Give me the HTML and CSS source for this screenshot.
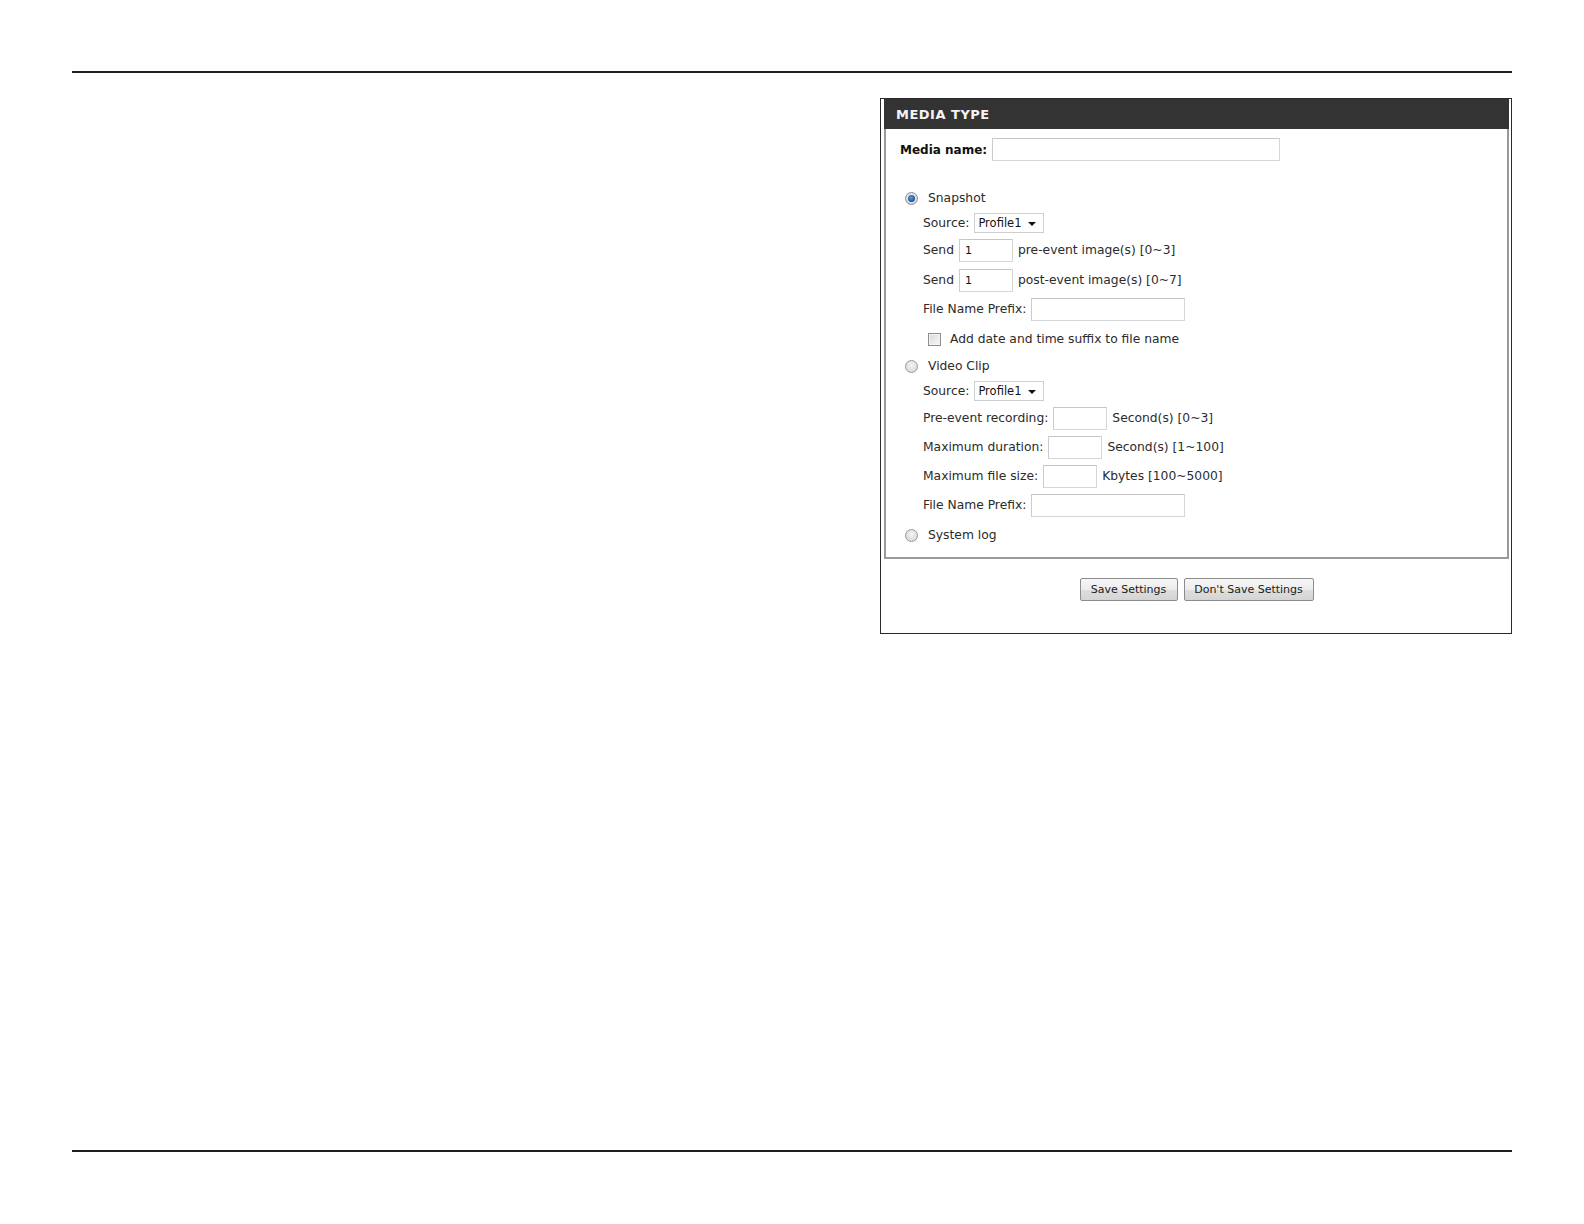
FILE: index.html
```html
<!DOCTYPE html>
<html>
<head>
<meta charset="utf-8">
<title>Media Type</title>
<link rel="stylesheet" href="styles.css">
</head>
<body>
<div class="page">
  <div class="rule"></div>
  <div class="frame">
    <div class="panel">
      <div class="panel-head">MEDIA TYPE</div>
      <div class="panel-body">
        <div class="row media-row">
          <span class="bold-label">Media name:</span>
          <span class="input input-media"></span>
        </div>

        <div class="row radio-row first-radio">
          <span class="radio checked"></span>
          <span class="radio-label">Snapshot</span>
        </div>
        <div class="row sub after-radio">
          <span class="label">Source:</span>
          <span class="select"><span class="select-text">Profile1</span><span class="caret"></span></span>
        </div>
        <div class="row sub after-select">
          <span class="label">Send</span>
          <span class="input input-small"><span class="input-text">1</span></span>
          <span class="label">pre-event image(s) [0~3]</span>
        </div>
        <div class="row sub row-wide">
          <span class="label">Send</span>
          <span class="input input-small"><span class="input-text">1</span></span>
          <span class="label">post-event image(s) [0~7]</span>
        </div>
        <div class="row sub">
          <span class="label">File Name Prefix:</span>
          <span class="input input-prefix"></span>
        </div>
        <div class="row check-row">
          <span class="checkbox"></span>
          <span class="check-label">Add date and time suffix to file name</span>
        </div>

        <div class="row radio-row video-radio">
          <span class="radio"></span>
          <span class="radio-label">Video Clip</span>
        </div>
        <div class="row sub after-radio">
          <span class="label">Source:</span>
          <span class="select"><span class="select-text">Profile1</span><span class="caret"></span></span>
        </div>
        <div class="row sub after-select">
          <span class="label">Pre-event recording:</span>
          <span class="input input-small"></span>
          <span class="label">Second(s) [0~3]</span>
        </div>
        <div class="row sub">
          <span class="label">Maximum duration:</span>
          <span class="input input-small"></span>
          <span class="label">Second(s) [1~100]</span>
        </div>
        <div class="row sub">
          <span class="label">Maximum file size:</span>
          <span class="input input-small"></span>
          <span class="label">Kbytes [100~5000]</span>
        </div>
        <div class="row sub">
          <span class="label">File Name Prefix:</span>
          <span class="input input-prefix"></span>
        </div>

        <div class="row radio-row last-radio">
          <span class="radio"></span>
          <span class="radio-label">System log</span>
        </div>
      </div>
    </div>
    <div class="buttons">
      <span class="btn btn-save">Save Settings</span>
      <span class="btn btn-nosave">Don't Save Settings</span>
    </div>
  </div>
  <div class="rule rule-bottom"></div>
</div>
</body>
</html>
```

FILE: styles.css
```css
html, body {
  margin: 0;
  padding: 0;
  background: #ffffff;
}

body {
  font-family: "DejaVu Sans", Verdana, sans-serif;
  font-size: 12.3px;
  color: #2b2b2b;
}

.page {
  box-sizing: border-box;
  width: 1440px;
  height: 1152px;
  margin-left: 72px;
  padding-top: 71px;
  display: flex;
  flex-direction: column;
}

.rule {
  height: 2px;
  background: #1f1f1f;
  flex: none;
}

.rule-bottom {
  margin-top: auto;
}

.frame {
  box-sizing: border-box;
  width: 632px;
  margin-top: 25px;
  margin-left: auto;
  border: 1px solid #2a2a2a;
  padding: 0 2px 32px 3px;
  flex: none;
}

.panel {
  width: 625px;
}

.panel-head {
  height: 30px;
  background: #333333;
  color: #f4f4f4;
  font-weight: bold;
  font-size: 13px;
  letter-spacing: 0.5px;
  display: flex;
  align-items: center;
  padding-left: 12px;
}

.panel-body {
  border: 2px solid #9a9a9a;
  border-top: none;
  padding: 9px 0 11px 14px;
}

.row {
  display: flex;
  align-items: center;
  height: 22px;
  margin-top: 7px;
  white-space: nowrap;
}

.media-row {
  margin-top: 0;
  height: 23px;
  font-size: 12px;
}

.bold-label {
  font-weight: bold;
  color: #111;
  margin-right: 5px;
}

.radio-row {
  padding-left: 5px;
}

.first-radio {
  margin-top: 26px;
}

.video-radio {
  margin-top: 5px;
}

.last-radio {
  margin-top: 8px;
}

.sub {
  padding-left: 23px;
}

.after-radio {
  margin-top: 3px;
}

.after-select {
  margin-top: 5px;
}

.row-wide {
  margin-top: 8px;
}

.check-row {
  padding-left: 28px;
  margin-top: 8px;
}

.label {
  margin-right: 5px;
}

.input + .label {
  margin-left: 0;
}

.radio-label {
  margin-left: 10px;
}

.check-label {
  margin-left: 9px;
}

.input {
  box-sizing: border-box;
  height: 23px;
  background: #fff;
  border: 1px solid #d6d6d6;
  border-top-color: #c6c6c6;
  border-left-color: #cccccc;
  display: flex;
  align-items: center;
  flex: none;
}

.input-media {
  width: 288px;
}

.input-small {
  width: 54px;
  margin-right: 5px;
}

.input-prefix {
  width: 154px;
}

.input-text {
  font-size: 11px;
  color: #111;
  padding-left: 5px;
}

.select {
  box-sizing: border-box;
  width: 70px;
  height: 20px;
  border: 1px solid #cfcfcf;
  background: #fff;
  display: flex;
  align-items: center;
  justify-content: space-between;
  padding: 0 7px 0 3px;
  flex: none;
}

.select-text {
  font-size: 11.5px;
  color: #111;
}

.caret {
  width: 0;
  height: 0;
  border-left: 4px solid transparent;
  border-right: 4px solid transparent;
  border-top: 4px solid #111;
  margin-top: 2px;
}

.radio {
  box-sizing: border-box;
  width: 13px;
  height: 13px;
  border-radius: 50%;
  border: 1px solid #9a9a9a;
  background: radial-gradient(circle at 50% 40%, #f4f4f4 0%, #dcdcdc 70%, #cfcfcf 100%);
  flex: none;
  position: relative;
}

.radio.checked {
  border-color: #7f8ea0;
}

.radio.checked::after {
  content: "";
  position: absolute;
  left: 2px;
  top: 2px;
  width: 7px;
  height: 7px;
  border-radius: 50%;
  background: radial-gradient(circle at 45% 40%, #5fa0e0 0%, #24589f 60%, #173f7a 100%);
}

.checkbox {
  box-sizing: border-box;
  width: 13px;
  height: 13px;
  border: 1px solid #8e8e8e;
  background: linear-gradient(135deg, #d8d8d8 0%, #ececec 60%, #f6f6f6 100%);
  box-shadow: inset 0 0 0 1px #f4f4f4;
  flex: none;
}

.buttons {
  display: flex;
  justify-content: center;
  gap: 6px;
  margin-top: 19px;
}

.btn {
  box-sizing: border-box;
  height: 23px;
  display: flex;
  align-items: center;
  justify-content: center;
  font-size: 11px;
  color: #1a1a1a;
  border: 1px solid #8c8c8c;
  border-radius: 2px;
  background: linear-gradient(#f7f7f7 0%, #ececec 50%, #dedede 51%, #d4d4d4 100%);
}

.btn-save {
  width: 98px;
}

.btn-nosave {
  width: 130px;
}
```
